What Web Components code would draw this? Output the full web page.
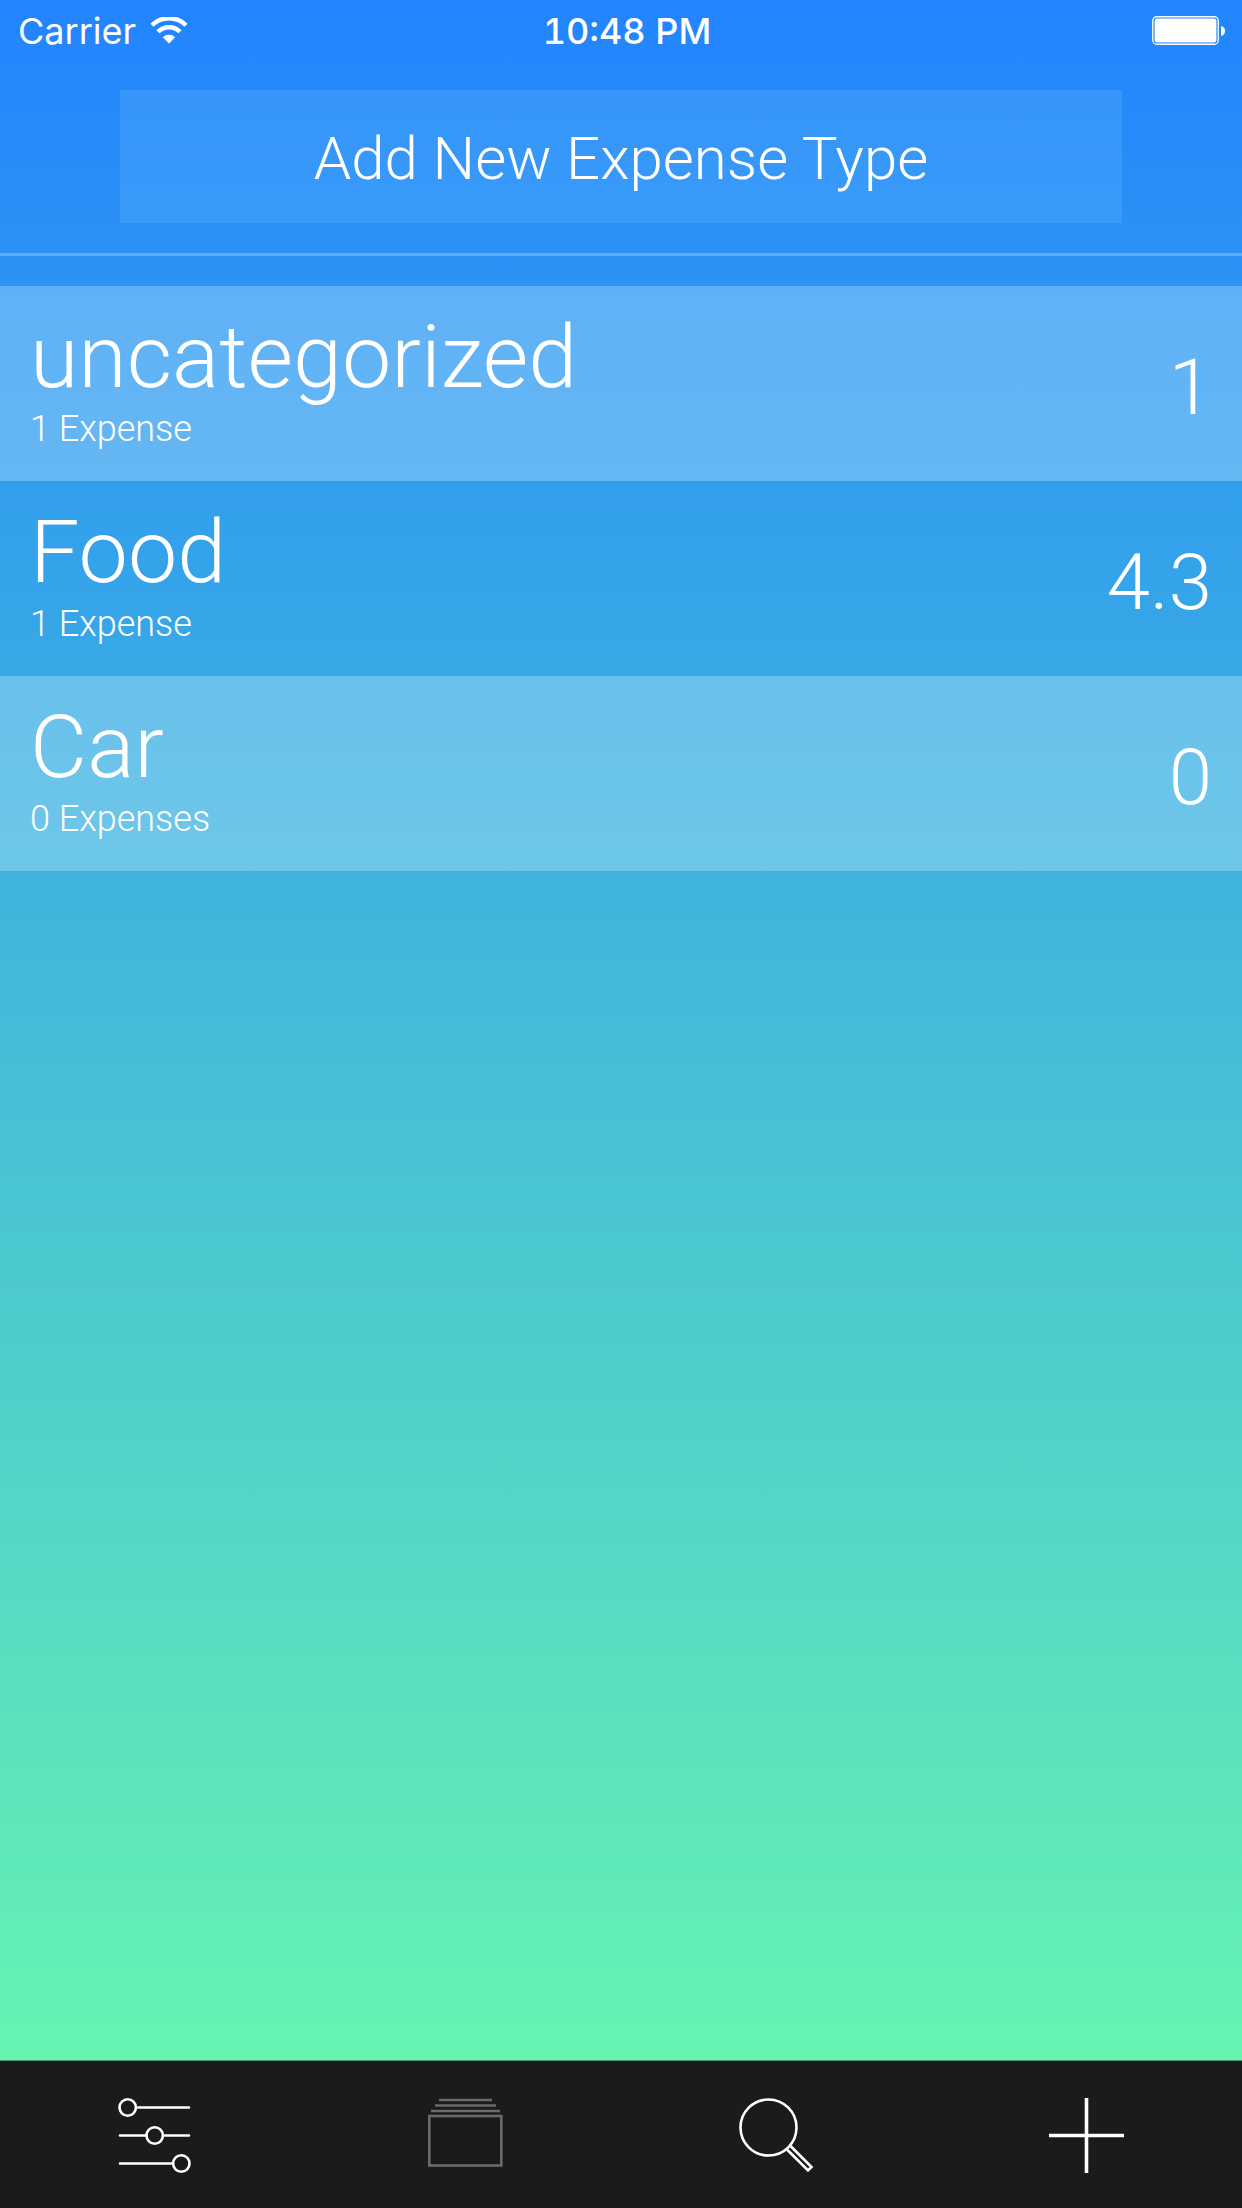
<!DOCTYPE html>
<html lang="en">
<head>
<meta charset="utf-8">
<meta name="viewport" content="width=device-width, initial-scale=1">
<title>Expense Types</title>
<style>
  html, body { margin: 0; height: 100%; }
  body { font-family: Inter, "Liberation Sans", sans-serif; color: #fff; }
</style>
</head>
<body>
<expense-app></expense-app>
<script>
const define = (name, html) => {
  const tpl = document.createElement('template');
  tpl.innerHTML = html;
  customElements.define(name, class extends HTMLElement {
    constructor() {
      super();
      this.attachShadow({ mode: 'open' }).append(tpl.content.cloneNode(true));
    }
  });
};

define('status-bar', `
<style>
  :host { display: grid; grid-template-columns: 1fr auto 1fr; align-items: center; height: 62px; padding: 0 16px 0 18px; font-size: 36px; }
  .left { display: flex; align-items: center; gap: 14px; }
  .time { padding-left: 10px; font-weight: 500; font-variant-numeric: tabular-nums; }
  .battery { justify-self: end; }
  svg { display: block; fill: #fff; }
</style>
<div class="left"><span>Carrier</span>
  <svg width="38" height="28" viewBox="0 0 38 28" role="img" aria-label="Wi-Fi">
    <g fill="none" stroke="#fff" stroke-width="4.4"><path d="M2 8.2A24.2 24.2 0 0 1 36 8.2"/><path d="M8 14.8A15.6 15.6 0 0 1 30 14.8"/></g>
    <path d="M12.8 20.2A9 9 0 0 1 25.2 20.2L19 26.5Z"/>
  </svg>
</div>
<span class="time">10:48 PM</span>
<svg class="battery" width="74" height="30" viewBox="0 0 74 30" role="img" aria-label="Battery full">
  <rect x=".75" y=".75" width="65.5" height="27.5" rx="4" fill="none" stroke="#fff" stroke-width="1.3"/>
  <rect x="2.6" y="2.6" width="61.8" height="23.8" rx="2.6"/>
  <path d="M69 10Q73 11 73 15T69 20Z"/>
</svg>`);

define('add-type-button', `
<style>
  :host { display: block; padding: 28px 120px 30px; border-bottom: 3px solid rgba(230,255,255,.26); }
  button { display: block; width: 100%; height: 133px; border: 0; padding: 4px 0 0; background: rgba(160,230,255,.13); color: inherit; font: 300 60px/72px Roboto, sans-serif; }
</style>
<button type="button"><slot></slot></button>`);

define('expense-row', `
<style>
  :host { display: flex; justify-content: space-between; align-items: flex-start; height: 195px; padding: 22px 30px 0; box-sizing: border-box; }
  :host([shaded]) { background: rgba(235,255,255,.27); }
  .name { font: 300 88px/98px Roboto, sans-serif; }
  .count { font: 300 36px/46px Roboto, sans-serif; }
  .total { font: 300 78px/92px Roboto, sans-serif; padding-top: 34px; }
</style>
<div><div class="name"><slot name="name"></slot></div><div class="count"><slot name="count"></slot></div></div>
<div class="total"><slot name="total"></slot></div>`);

define('tab-bar', `
<style>
  :host { display: block; background: #1b1b1b; border-top: 1px solid #429a72; }
  nav { display: grid; grid-template-columns: repeat(4, 1fr); height: 147px; }
  button { display: flex; align-items: center; justify-content: center; padding: 0; border: 0; background: none; color: #fff; }
  svg { display: block; fill: none; stroke: currentColor; stroke-width: 2.6; }
  button:disabled { color: #6a6a6a; }
</style>
<nav aria-label="Main">
  <button type="button" aria-label="Settings"><svg width="76" height="76" viewBox="0 0 76 76">
    <g stroke-linecap="round"><path d="M21 10.5H72M3 38.5H29M48 38.5H72M3 66.5H56"/></g>
    <circle cx="10.7" cy="10.5" r="8.2"/><circle cx="37.7" cy="38.5" r="8.2"/><circle cx="64.3" cy="66.5" r="8.2"/></svg></button>
  <button type="button" aria-label="Expense types" disabled><svg width="76" height="76" viewBox="0 0 76 76">
    <path d="M11 3H64M7 8.5H68M3 14H72"/><rect x="1.3" y="19" width="72" height="49.5"/></svg></button>
  <button type="button" aria-label="Search"><svg width="76" height="76" viewBox="0 0 76 76">
    <circle cx="30.5" cy="30.5" r="28"/><path d="M52 48.5L73.5 70L70 73.5L48.5 52"/></svg></button>
  <button type="button" aria-label="Add expense"><svg width="76" height="76" viewBox="0 0 76 76">
    <path d="M37.5 1V76M0 38.5H75" style="stroke-width:3.6"/></svg></button>
</nav>`);

define('expense-app', `
<style>
  :host { display: flex; flex-direction: column; min-height: 100vh; background: linear-gradient(#2284ff, #6cfcac); }
  main { flex: 1; padding-top: 30px; }
</style>
<status-bar></status-bar>
<add-type-button>Add New Expense Type</add-type-button>
<main>
  <expense-row shaded><span slot="name">uncategorized</span><span slot="count">1 Expense</span><span slot="total">1</span></expense-row>
  <expense-row><span slot="name">Food</span><span slot="count">1 Expense</span><span slot="total">4.3</span></expense-row>
  <expense-row shaded><span slot="name">Car</span><span slot="count">0 Expenses</span><span slot="total">0</span></expense-row>
</main>
<tab-bar></tab-bar>`);
</script>
</body>
</html>
